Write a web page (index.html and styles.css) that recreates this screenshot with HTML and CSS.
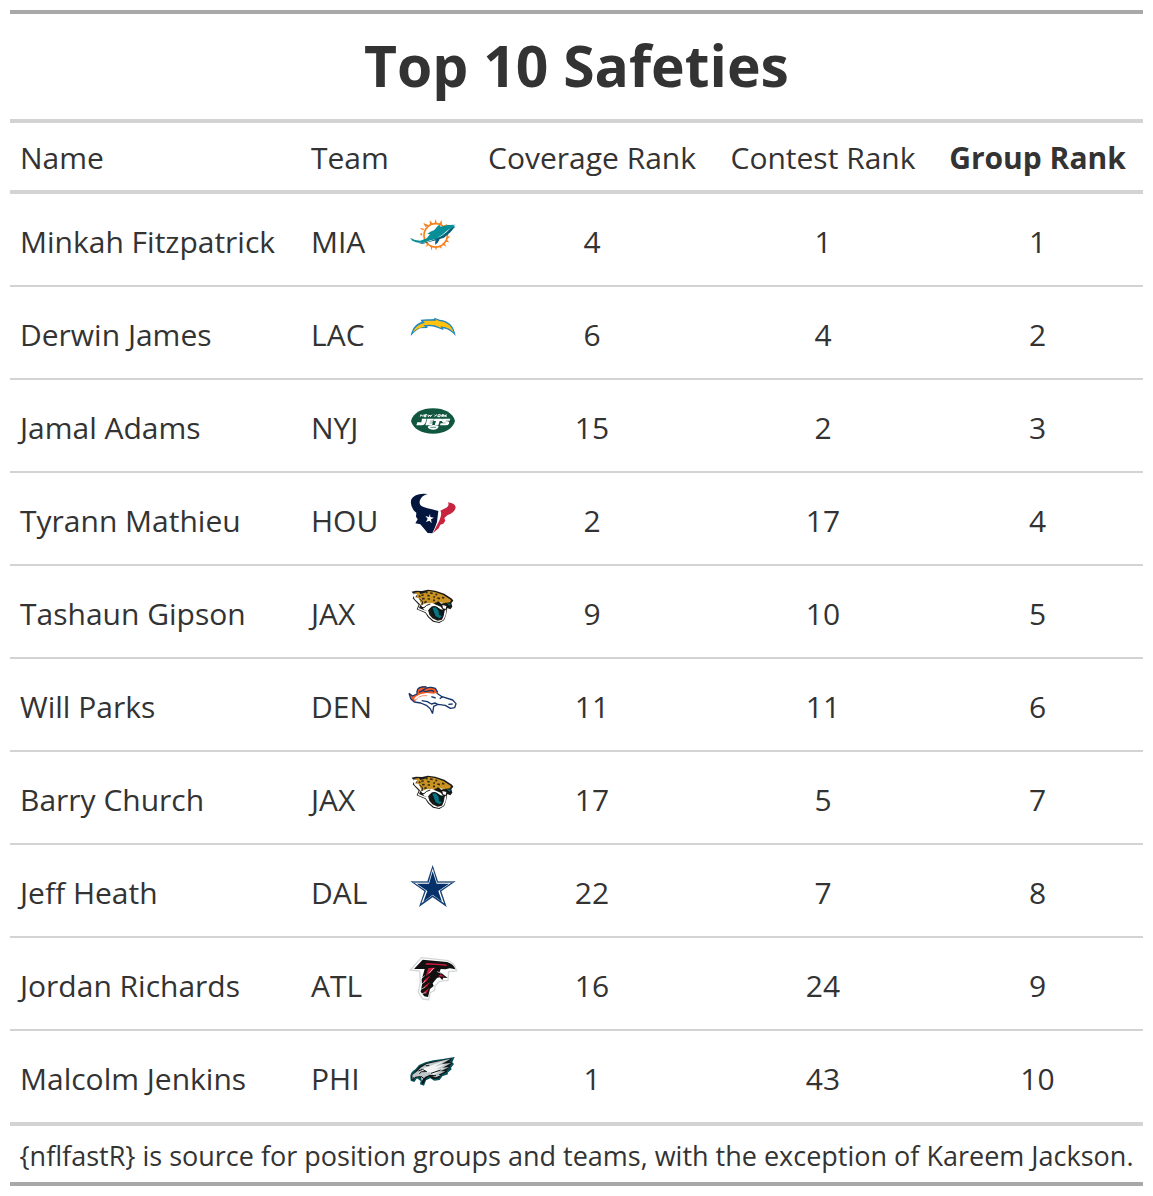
FILE: index.html
```html
<!DOCTYPE html>
<html lang="en">
<head>
<meta charset="utf-8">
<meta name="viewport" content="width=device-width, initial-scale=1">
<title>Top 10 Safeties</title>
<link rel="stylesheet" href="styles.css">
</head>
<body>
<svg class="symbols" aria-hidden="true">
  <symbol id="jaguars" viewBox="0 0 198 150">
    <path d="M35 29L48 26L66 27L84 23L106 26L133 35L156 50L160 56L154 63L157 74L151 82L142 78L138 100L132 115L118 123L99 119L84 106L76 93L50 82L56 68L38 49L43 40Z" fill="#1c1a16"/>
    <path d="M43 32L57 30L61 36L73 33L85 27L105 30L130 39L153 54L150 61L134 63L121 66L108 61L99 67L89 69L79 78L64 73L58 61L46 51L52 40Z" fill="#c99424"/>
    <path d="M40 34L52 37L46 46L57 49L63 65L57 78L71 84L85 87L88 98L97 109L113 116L126 113L131 102L134 86L139 82L137 100L130 114L117 120L101 116L87 104L77 91L53 81L60 67L43 50Z" fill="#fff"/>
    <path d="M64 70L79 64L96 63L108 68L122 74L129 83L121 82L108 73L96 73L88 80L83 88L72 83Z" fill="#fff"/>
    <path d="M94 78L102 72L114 77L126 86L131 84L129 101L121 110L108 107L97 95Z" fill="#07191d"/>
    <path d="M97 77L107 76L116 87L117 99L126 102L119 109L107 103Z" fill="#087681"/>
    <path d="M113 58L127 63L123 70L108 66M135 62L153 66L151 74L143 75Z" fill="#111"/>
    <path d="M127 69L139 72L137 81L129 79Z" fill="#fff"/>
    <path d="M117 59L129 62L124 66Z" fill="#e7edcf"/>
    <path d="M139 64L153 66L149 71Z" fill="#087681"/>
    <path d="M64 40L71 39M77 32L83 31M90 33L98 34M106 37L112 38M82 40L89 42M66 50L74 50M83 51L90 51M112 48L120 50M126 46L133 48M73 61L80 59M99 55L105 55M57 41L61 45M100 44L105 46" stroke="#3a2b12" stroke-width="5"/>
    <path d="M58 50L68 60L66 69M62 76L72 77L80 70L91 66" fill="none" stroke="#1c1a16" stroke-width="3"/>
  </symbol>
</svg>
<main class="page">
<table class="ranking">
  <caption class="title">Top 10 Safeties</caption>
  <colgroup>
    <col class="col-name"><col class="col-team"><col class="col-logo"><col class="col-coverage"><col class="col-contest"><col class="col-group">
  </colgroup>
  <thead>
    <tr><th scope="col">Name</th><th scope="col">Team</th><td></td><th scope="col" class="rank">Coverage Rank</th><th scope="col" class="rank">Contest Rank</th><th scope="col" class="rank strong">Group Rank</th></tr>
  </thead>
  <tbody>
    <tr><td>Minkah Fitzpatrick</td><td>MIA</td><td class="logo"><svg viewBox="0 0 198 150" role="img" aria-label="Miami Dolphins">
      <circle cx="107" cy="76" r="35" fill="#fff" stroke="#f58220" stroke-width="5"/>
      <path d="M103 41L107 27L111 41ZM90 44L89 31L99 41ZM117 42L125 30L126 45ZM76 51L70 39L87 46ZM130 47L142 42L136 55ZM68 61L59 54L74 56ZM140 64L152 65L141 71ZM66 69L59 72L67 78ZM141 77L151 81L141 86ZM139 88L148 97L135 95ZM132 97L139 110L126 103ZM123 105L125 117L116 108ZM111 109L109 121L103 110ZM98 108L94 122L91 105ZM87 103L78 111L81 100ZM76 94L64 98L72 89Z" fill="#f58220"/>
      <path d="M30 83L45 90L61 92L80 85L90 73L82 72L91 65L103 60L113 48L118 44L122 50L143 45L167 44L160 48L167 51L151 58L134 77L118 86L114 94L105 101L107 88L91 91L69 99L48 97L37 92Z" fill="#078e97"/>
      <path d="M49 97L68 100L89 94L108 87L131 76L150 57L165 50L151 67L132 83L119 87L113 98L105 105L108 91L90 95L67 102Z" fill="#075a78"/>
      <path d="M110 84L126 75L139 64L153 53L139 67L124 78Z" fill="#fff"/>
    </svg></td><td class="rank">4</td><td class="rank">1</td><td class="rank">1</td></tr>
    <tr><td>Derwin James</td><td>LAC</td><td class="logo"><svg viewBox="0 -6 198 150" role="img" aria-label="Los Angeles Chargers">
      <path d="M32 93C37 68 48 56 65 51L62 44C77 43 88 43 103 42L103 38L119 44C146 46 163 64 167 93C157 81 146 73 130 70L130 75L105 66C97 63 87 64 80 65L84 69L60 70C49 75 41 84 32 93Z" fill="#2386bd"/>
      <path d="M38 83C46 64 60 56 75 54L69 48C84 47 96 48 108 47L107 43L117 48C142 50 156 65 161 82C150 70 137 67 122 64L124 69L104 61C92 58 82 59 70 61L76 66C59 66 48 73 38 83Z" fill="#ffc20e"/>
    </svg></td><td class="rank">6</td><td class="rank">4</td><td class="rank">2</td></tr>
    <tr><td>Jamal Adams</td><td>NYJ</td><td class="logo"><svg viewBox="0 -3 198 150" role="img" aria-label="New York Jets">
      <path d="M33 72C39 48 65 34 99 34S159 48 165 72C159 96 133 110 99 110S39 96 33 72Z" fill="#115740"/>
      <path d="M61 59L63 53L68 58L70 53M81 53L74 53L72 59L79 59M74 56L79 56M84 53L85 59L90 54L91 59L96 53M103 53L106 56L111 53M106 56L104 59M115 53L121 53L120 59L113 59ZM124 59L126 53L132 54L126 57L131 59M135 53L133 59M141 53L135 57L140 59" fill="none" stroke="#fff" stroke-width="3"/>
      <path d="M66 65H80L76 78Q73 85 66 85H49L52 76H64ZM82 65H102L100 71H91L90 73H99L97 77H89L88 79H98L96 85H76ZM103 65H128L126 72H119L115 85H104L108 72H101ZM131 65H151L149 71H138L137 73H144Q149 74 147 80Q144 85 138 85H120L122 79H136L137 77H129Q124 74 127 69Q128 65 131 65Z" fill="#fff"/>
      <path d="M83 90Q86 84 100 84Q114 84 116 89Q112 98 100 98Q87 98 83 90Z" fill="#fff"/>
      <path d="M91 91H108" stroke="#115740" stroke-width="2"/>
    </svg></td><td class="rank">15</td><td class="rank">2</td><td class="rank">3</td></tr>
    <tr><td>Tyrann Mathieu</td><td>HOU</td><td class="logo"><svg viewBox="0 3 198 150" role="img" aria-label="Houston Texans">
      <path d="M83 18L70 17Q43 18 34 34Q29 52 42 68L49 74L48 86L53 94L46 106L61 109L73 123L83 135L97 136Q106 118 111 102L115 69L96 64Q81 61 71 57Q55 51 60 37Q65 22 83 18Z" fill="#03173e"/>
      <path d="M144 43Q149 53 139 59L121 68Q127 76 119 95L107 119L99 135Q108 128 116 121L121 110L130 107L136 98L133 90L142 82Q166 72 167 58Q166 46 144 43Z" fill="#c9243f"/>
      <path d="M90 77L91 87L102 89L93 94L95 106L88 98L78 102L83 92L76 84L87 87Z" fill="#fff"/>
    </svg></td><td class="rank">2</td><td class="rank">17</td><td class="rank">4</td></tr>
    <tr><td>Tashaun Gipson</td><td>JAX</td><td class="logo"><svg role="img" aria-label="Jacksonville Jaguars"><use href="#jaguars"/></svg></td><td class="rank">9</td><td class="rank">10</td><td class="rank">5</td></tr>
    <tr><td>Will Parks</td><td>DEN</td><td class="logo"><svg viewBox="0 0 198 150" role="img" aria-label="Denver Broncos">
      <path d="M27 55L37 63L52 56Q48 37 66 35L79 35L73 43Q79 35 94 37L106 40L113 53L100 56L80 54L61 58L47 65L42 73L50 77L43 80L32 71Z" fill="#f15a24"/>
      <path d="M45 72L61 60L80 56L102 57L122 63L137 67L160 75L168 86L164 98L151 99L136 92L116 89L102 95L98 112L90 98L78 88L64 81L48 79Z" fill="#fff"/>
      <path d="M27 55L32 71L43 81L62 84L79 91L91 101L98 116M27 55L37 63L51 57Q49 37 66 36L79 35M62 50L73 43Q79 36 94 37L106 40L113 52M57 52L67 47L78 50L94 46L102 50M65 77L82 80L94 87L106 84L113 88L101 94L98 114M110 54L127 66L119 71M126 65L158 75L168 86L164 98L151 100L136 91L114 88M94 65L107 69M145 88L158 87" fill="none" stroke="#17356b" stroke-width="4" stroke-linejoin="round"/>
      <path d="M55 67L68 62L82 62M45 75L54 70" fill="none" stroke="#f15a24" stroke-width="2"/>
    </svg></td><td class="rank">11</td><td class="rank">11</td><td class="rank">6</td></tr>
    <tr><td>Barry Church</td><td>JAX</td><td class="logo"><svg role="img" aria-label="Jacksonville Jaguars"><use href="#jaguars"/></svg></td><td class="rank">17</td><td class="rank">5</td><td class="rank">7</td></tr>
    <tr><td>Jeff Heath</td><td>DAL</td><td class="logo"><svg viewBox="0 0 198 150" role="img" aria-label="Dallas Cowboys">
      <path d="M98 12L114 61H167L124 91L140 138L98 109L57 138L73 91L31 61H82Z" fill="#164177"/>
      <path d="M98 22L111 65H154L119 89L132 127L98 103L64 127L78 89L43 65H86Z" fill="#fff"/>
      <path d="M98 31L110 68H147L115 90L126 122L98 101L70 122L82 90L50 68H87Z" fill="#063069"/>
      <path d="M39 63H83M113 63H160" stroke="#8297ac" stroke-width="3"/>
    </svg></td><td class="rank">22</td><td class="rank">7</td><td class="rank">8</td></tr>
    <tr><td>Jordan Richards</td><td>ATL</td><td class="logo"><svg viewBox="0 3 198 150" role="img" aria-label="Atlanta Falcons">
      <path d="M64 14L141 22Q164 28 170 54L146 56L144 82L119 85L105 99L104 112L91 119L86 140L68 138L55 118L61 85L59 54L31 51Z" fill="#fff" stroke="#d4d7d9" stroke-width="4"/>
      <path d="M68 20L141 27Q161 33 166 49L150 46L136 49L122 48L119 57L128 63L143 75L130 74L127 81L119 73L111 75L98 91L101 99L90 108L84 132L73 130L62 116L66 95L65 80L74 48L42 48Z" fill="#111"/>
      <path d="M79 30L137 34L142 39L112 36L76 35ZM85 45L106 44L92 58L77 70ZM122 64L134 71L114 70ZM72 82L92 66L80 84L70 91ZM70 101L90 87L80 102ZM72 117L88 105L78 123Z" fill="#c71838"/>
      <path d="M64 77L74 68M65 94L76 84M63 109L76 102M65 122L77 119M87 61L101 45M112 56L124 61" stroke="#fff" stroke-width="2"/>
    </svg></td><td class="rank">16</td><td class="rank">24</td><td class="rank">9</td></tr>
    <tr><td>Malcolm Jenkins</td><td>PHI</td><td class="logo"><svg viewBox="0 3 198 150" role="img" aria-label="Philadelphia Eagles">
      <path d="M31 90Q32 78 46 70L57 57L76 49L100 43L128 39L164 33L157 49L162 54L153 65L155 70L143 80L144 85L127 91L119 102L103 104L91 97L78 103L72 119L60 115L62 105L51 97L43 108L32 104Z" fill="#075058"/>
      <path d="M34 91L49 73L60 60L83 50L156 37L148 48L157 51L148 60L151 64L139 73L141 78L126 85L117 97L99 100L87 91L78 98L70 114L64 111L69 101L57 93L44 96L40 104L35 101Z" fill="#111719"/>
      <path d="M37 87L50 77L62 65L80 54L152 38L125 54L153 51L128 65L148 63L121 76L136 76L115 86L122 88L107 94L89 87L76 92L65 104L62 90L46 92L38 101Z" fill="#bfc7ca"/>
      <path d="M73 66L97 57L132 45L104 62L137 54L108 70L132 66L102 79L115 79L101 86L90 78L76 80L65 73Z" fill="#f2f4f4"/>
      <path d="M55 75L67 70L80 77L65 77L58 83M77 59L88 59M93 82L122 72M86 88L108 89M63 91L72 98L70 107M41 94L38 102" fill="none" stroke="#111719" stroke-width="3"/>
    </svg></td><td class="rank">1</td><td class="rank">43</td><td class="rank">10</td></tr>
  </tbody>
  <tfoot>
    <tr><td colspan="6">{nflfastR} is source for position groups and teams, with the exception of Kareem Jackson.</td></tr>
  </tfoot>
</table>
</main>
</body>
</html>
```
FILE: styles.css
```css
* { box-sizing: border-box; }

body {
  margin: 0;
  background: #fff;
  color: #333;
  font-family: "Segoe UI", "Open Sans", "Noto Sans", sans-serif;
  font-size: 30px;
  line-height: 40px;
}

.symbols { display: none; }

.page { padding: 10px; }

.ranking {
  width: 100%;
  table-layout: fixed;
  border-collapse: separate;
  border-spacing: 0;
  border-bottom: 4px solid #a8a8a8;
}

.title {
  border-top: 4px solid #a8a8a8;
  padding: 11px 0 14px;
  font-size: 57px;
  font-weight: 700;
  line-height: 80px;
}

.col-name { width: 291px; }
.col-team { width: 95px; }
.col-logo { width: 74px; }
.col-coverage { width: 244px; }
.col-contest { width: 218px; }
.col-group { width: 211px; }

.ranking th,
.ranking td {
  padding: 0 0 0 10px;
  text-align: left;
  font-weight: 400;
  white-space: nowrap;
}

.ranking thead th,
.ranking thead td {
  height: 75px;
  padding-top: 2px;
  border-top: 4px solid #d3d3d3;
  border-bottom: 4px solid #d3d3d3;
}

.ranking tbody td {
  height: 93px;
  padding-top: 4px;
  border-bottom: 2px solid #d3d3d3;
}

.ranking tbody tr:last-child td {
  height: 95px;
  border-bottom-width: 4px;
}

.ranking .rank {
  padding-left: 0;
  padding-right: 0;
  text-align: center;
}

.ranking thead .strong { font-weight: 700; }

.ranking tbody .logo {
  padding: 16px 0 0 4px;
  vertical-align: top;
}

.logo svg {
  display: block;
  width: 66px;
  height: 50px;
}

.ranking tfoot td {
  height: 56px;
  padding: 4px 0 0;
  font-size: 27px;
  text-align: center;
}
```
